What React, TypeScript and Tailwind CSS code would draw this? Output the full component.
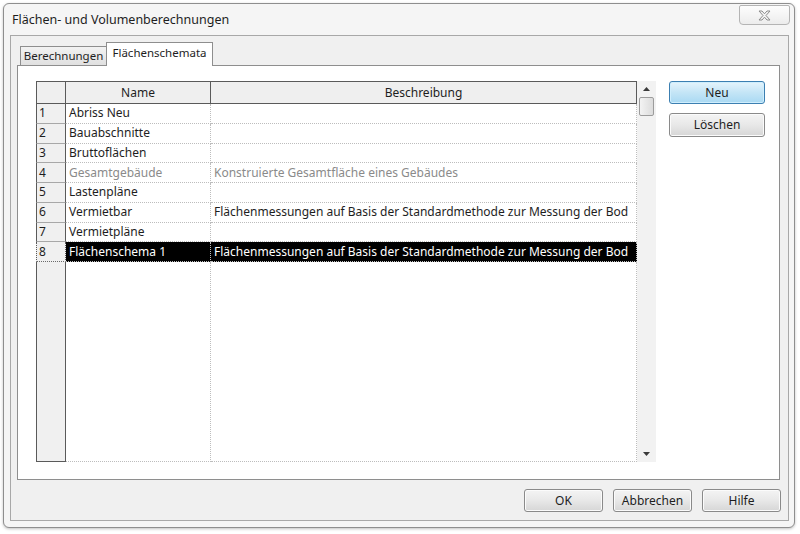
import React from "react";

type Row = { n: string; name: string; desc: string; muted?: boolean; selected?: boolean };

const rows: Row[] = [
  { n: "1", name: "Abriss Neu", desc: "" },
  { n: "2", name: "Bauabschnitte", desc: "" },
  { n: "3", name: "Bruttoflächen", desc: "" },
  { n: "4", name: "Gesamtgebäude", desc: "Konstruierte Gesamtfläche eines Gebäudes", muted: true },
  { n: "5", name: "Lastenpläne", desc: "" },
  { n: "6", name: "Vermietbar", desc: "Flächenmessungen auf Basis der Standardmethode zur Messung der Bod" },
  { n: "7", name: "Vermietpläne", desc: "" },
  { n: "8", name: "Flächenschema 1", desc: "Flächenmessungen auf Basis der Standardmethode zur Messung der Bod", selected: true },
];

function Button({ label, primary, className = "" }: { label: string; primary?: boolean; className?: string }) {
  return (
    <div
      className={
        "flex items-center justify-center rounded-[3px] border text-[12px] text-[#1e1e1e] " +
        (primary
          ? "border-[#3c7fb1] bg-gradient-to-b from-[#e5f4fc] via-[#c4e5f6] to-[#a9d9f3] shadow-[inset_0_0_0_1px_#cfeefd]"
          : "border-[#8a8a8a] bg-gradient-to-b from-[#f4f4f4] via-[#e8e8e8] to-[#d6d6d6] shadow-[inset_0_0_0_1px_#fbfbfb]") +
        " " +
        className
      }
    >
      {label}
    </div>
  );
}

function Grid() {
  return (
    <div className="flex w-[620px] h-[381px]">
      <div className="flex flex-col w-[601px] h-full">
        {/* header */}
        <div className="flex h-[23px] bg-[#efefef] border-t border-b border-[#5a5a5a] text-[12px] text-[#1e1e1e]">
          <div className="w-[30px] border-l border-r border-[#5a5a5a]" />
          <div className="w-[145px] border-r border-[#5a5a5a] flex items-center justify-center">Name</div>
          <div className="flex-1 border-r border-[#5a5a5a] flex items-center justify-center">Beschreibung</div>
        </div>
        {rows.map((r) => (
          <div key={r.n} className="flex h-[19.75px] text-[12px] leading-none">
            <div
              className={
                "w-[30px] border-l border-r border-[#5a5a5a] bg-[#f0f0f0] pl-[2px] flex items-center text-[#1e1e1e] " +
                (r.selected ? "border-b border-dotted border-b-[#6a6a6a]" : "border-b border-b-[#a8a8a8]")
              }
            >
              {r.n}
            </div>
            <div
              className={
                "w-[145px] border-r border-b border-dotted border-[#bdbdbd] pl-[3px] flex items-center whitespace-nowrap overflow-hidden " +
                (r.selected ? "bg-black text-white" : r.muted ? "text-[#8a8a8a]" : "text-[#1e1e1e]")
              }
            >
              {r.name}
            </div>
            <div
              className={
                "flex-1 min-w-0 border-r border-b border-dotted border-[#bdbdbd] pl-[3px] flex items-center whitespace-nowrap overflow-hidden " +
                (r.selected ? "bg-black text-white" : r.muted ? "text-[#8a8a8a]" : "text-[#1e1e1e]")
              }
            >
              {r.desc}
            </div>
          </div>
        ))}
        {/* empty area */}
        <div className="flex flex-1">
          <div className="w-[30px] border-l border-r border-b border-[#5a5a5a] bg-[#f0f0f0]" />
          <div className="w-[145px] border-r border-b border-dotted border-[#bdbdbd] bg-white" />
          <div className="flex-1 border-r border-b border-dotted border-[#bdbdbd] bg-white" />
        </div>
      </div>
      {/* scrollbar */}
      <div className="w-[19px] h-full bg-[#f2f2f2] flex flex-col items-center">
        <div className="h-[16px] flex items-center justify-center">
          <svg width="7" height="4" viewBox="0 0 7 4">
            <path d="M0 4 L3.5 0 L7 4 Z" fill="#3a3a3a" />
          </svg>
        </div>
        <div className="w-[15px] h-[19px] rounded-[2px] border border-[#9c9c9c] bg-gradient-to-r from-[#f3f3f3] to-[#dcdcdc]" />
        <div className="flex-1" />
        <div className="h-[16px] flex items-center justify-center">
          <svg width="7" height="4" viewBox="0 0 7 4">
            <path d="M0 0 L7 0 L3.5 4 Z" fill="#3a3a3a" />
          </svg>
        </div>
      </div>
    </div>
  );
}

export default function App() {
  return (
    <div className="w-[800px] h-[534px] bg-white overflow-hidden font-['Noto_Sans','Liberation_Sans',sans-serif] text-[#1e1e1e]">
      <div className="ml-[3px] mt-[3px] w-[792px] h-[525px] rounded-[6px] border border-[#8e8e8e] bg-[#f5f5f5] flex flex-col shadow-[0_1px_3px_rgba(0,0,0,0.25)]">
        {/* title bar */}
        <div className="h-[31px] flex items-start justify-between">
          <span className="pl-[8px] pt-[7px] text-[12.5px]">Flächen- und Volumenberechnungen</span>
          <div className="mt-[1px] mr-[4px] w-[51px] h-[20px] rounded-b-[4px] rounded-t-[2px] border border-[#b4b4b4] bg-gradient-to-b from-[#fdfdfd] to-[#ececec] flex items-center justify-center">
            <svg width="13" height="11" viewBox="0 0 13 11">
              <path
                d="M1 1 H4 L6.5 3.8 L9 1 H12 L8 5.5 L12 10 H9 L6.5 7.2 L4 10 H1 L5 5.5 Z"
                fill="#f4f4f4"
                stroke="#8c8c8c"
                strokeWidth="1"
                strokeLinejoin="round"
              />
            </svg>
          </div>
        </div>
        {/* client area */}
        <div className="ml-[6px] mr-[5px] mb-[6px] flex-1 border border-[#a8a8a8] bg-[#f0f0f0] flex flex-col">
          {/* tabs */}
          <div className="h-[29px] pl-[9px] flex items-end">
            <div className="h-[19px] w-[87px] border border-b-0 border-[#8e8e8e] bg-gradient-to-b from-[#f2f2f2] to-[#e0e0e0] text-[11.5px] flex items-center justify-center">
              Berechnungen
            </div>
            <div className="h-[24px] w-[107px] -ml-px border border-b-0 border-[#8e8e8e] bg-white text-[11.5px] flex items-center justify-center pb-[3px] relative top-px">
              Flächenschemata
            </div>
          </div>
          {/* panel */}
          <div className="ml-[6px] mr-[8px] h-[415px] border border-[#8e8e8e] bg-white flex pl-[18px] pt-[15px]">
            <Grid />
            <div className="ml-[13px] w-[96px] flex flex-col gap-[9px]">
              <Button label="Neu" primary className="h-[23px]" />
              <Button label="Löschen" className="h-[24px]" />
            </div>
          </div>
          {/* bottom buttons */}
          <div className="flex justify-end gap-[10px] pr-[7px] pt-[9px]">
            <Button label="OK" className="w-[79px] h-[23px]" />
            <Button label="Abbrechen" className="w-[79px] h-[23px]" />
            <Button label="Hilfe" className="w-[79px] h-[23px]" />
          </div>
        </div>
      </div>
    </div>
  );
}
